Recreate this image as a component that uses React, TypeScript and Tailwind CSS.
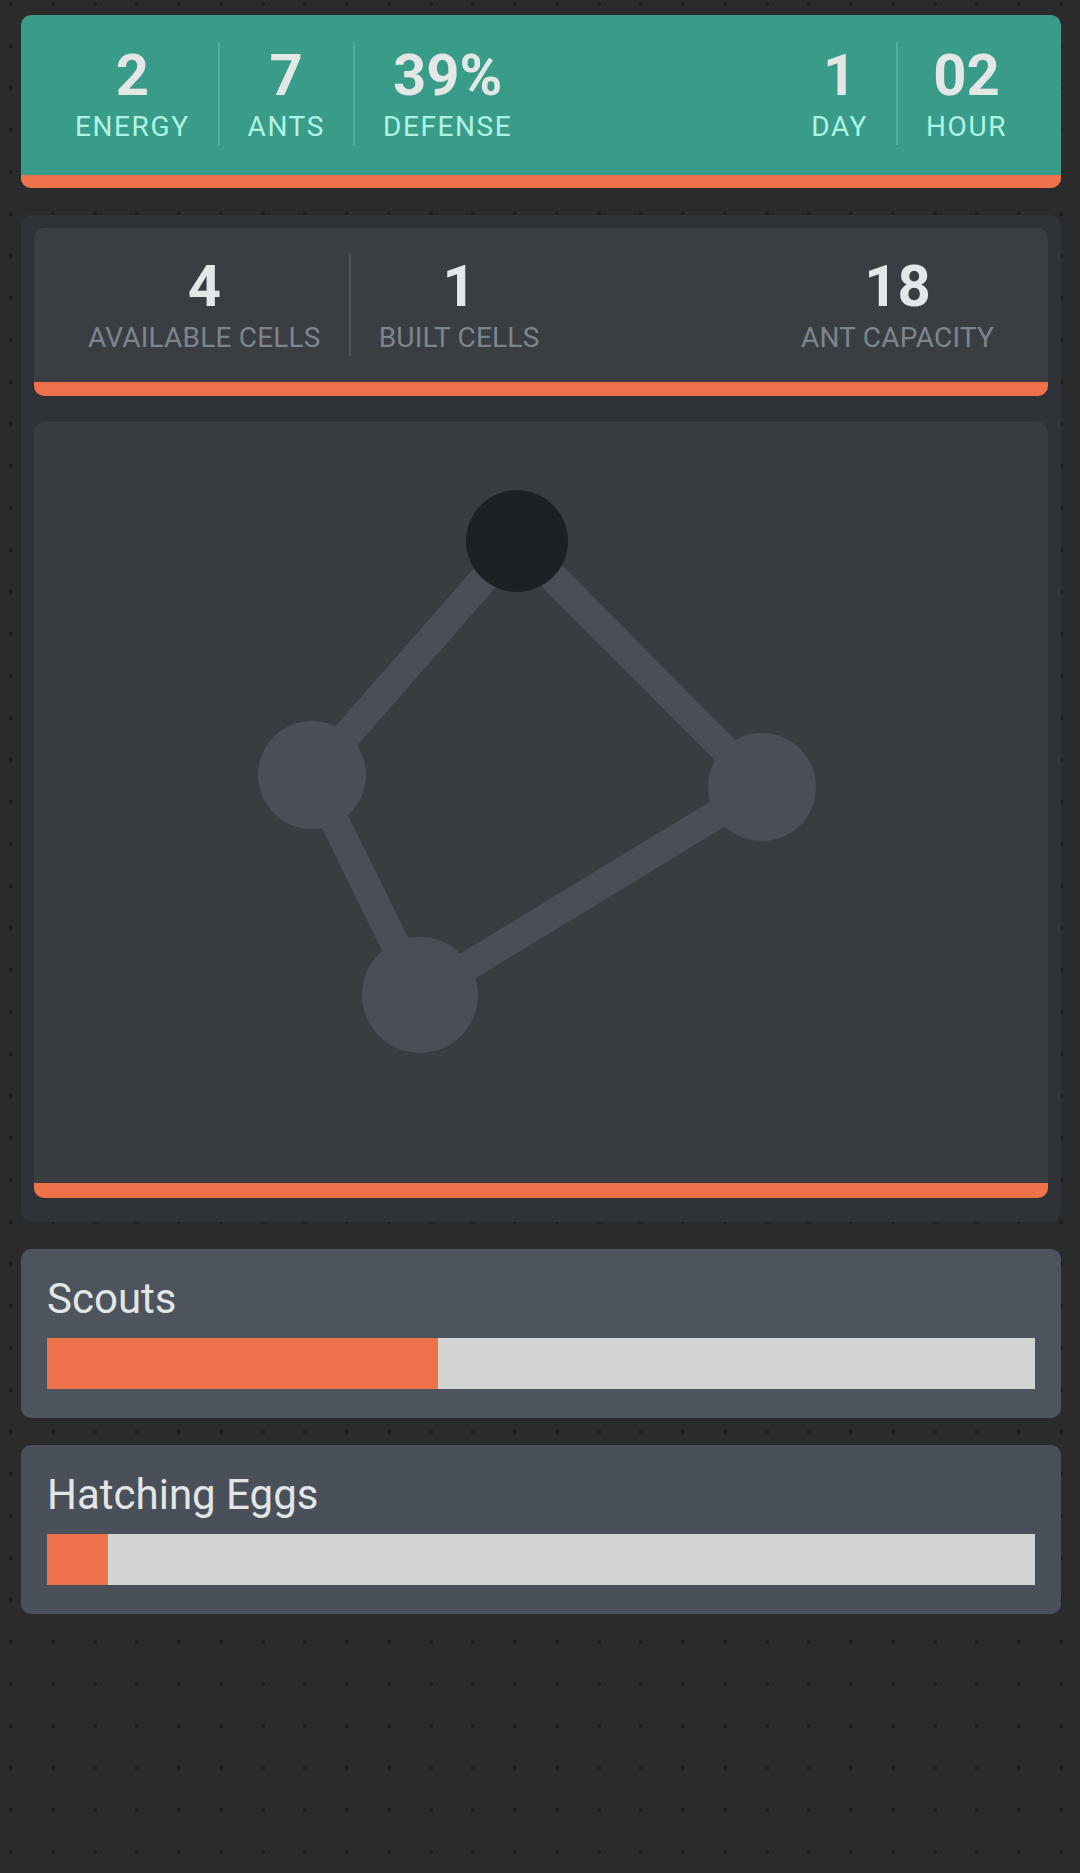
import React from 'react';

type Stat = { value: string; label: string };

const StatCol: React.FC<{ stat: Stat; divider?: boolean; tone: 'teal' | 'dark' }> = ({ stat, divider, tone }) => (
  <div
    className={`flex h-[103px] flex-col items-center justify-center px-7 ${
      divider ? (tone === 'teal' ? 'border-r-2 border-[#55ae9c]' : 'border-r-2 border-[#50555c]') : ''
    }`}
  >
    <div className="text-[58px] font-bold leading-none text-[#e3e7e5]">{stat.value}</div>
    <div
      className={`mt-[9px] text-[28px] leading-none ${
        tone === 'teal' ? 'tracking-[1.6px] text-[#aef3e3]' : 'tracking-[0.2px] text-[#7d858e]'
      }`}
    >
      {stat.label}
    </div>
  </div>
);

const ProgressPanel: React.FC<{ title: string; pct: number; bg: string }> = ({ title, pct, bg }) => (
  <div className={`rounded-[10px] px-[26px] pt-[29px] pb-[29px] ${bg}`}>
    <div className="text-[42px] leading-none text-[#e4e6e6]">{title}</div>
    <div className="mt-[18px] h-[51px] w-full bg-[#d2d4d2]">
      <div className="h-full bg-[#ed7149]" style={{ width: `${pct}%` }} />
    </div>
  </div>
);

// colony graph, coords relative to the graph card
const nodes = [
  { x: 483, y: 119, r: 51, dark: true },
  { x: 278, y: 353, r: 54 },
  { x: 728, y: 365, r: 54 },
  { x: 386, y: 573, r: 58 },
];

const edges: [number, number][] = [
  [0, 1],
  [0, 2],
  [1, 3],
  [3, 2],
];

export default function App() {
  return (
    <div
      className="min-h-[1873px] w-[1080px] bg-[#2b2b2b] bg-[radial-gradient(circle,#1f1f1f_2px,transparent_2.6px)] bg-[length:42px_42px] bg-[position:-10px_-17px] pt-[15px]"
      style={{ fontFamily: 'Roboto, "Noto Sans", sans-serif' }}
    >
      <div className="ml-[21px] flex w-[1040px] flex-col gap-[27px]">
        {/* header */}
        <div className="overflow-hidden rounded-[10px] bg-[#389c89]">
          <div className="flex items-center px-[26px] pt-[27px] pb-[30px]">
            <StatCol tone="teal" divider stat={{ value: '2', label: 'ENERGY' }} />
            <StatCol tone="teal" divider stat={{ value: '7', label: 'ANTS' }} />
            <StatCol tone="teal" stat={{ value: '39%', label: 'DEFENSE' }} />
            <div className="flex-1" />
            <StatCol tone="teal" divider stat={{ value: '1', label: 'DAY' }} />
            <StatCol tone="teal" stat={{ value: '02', label: 'HOUR' }} />
          </div>
          <div className="h-[13px] bg-[#ed7149]" />
        </div>

        {/* colony */}
        <div className="flex flex-col gap-[26px] rounded-[10px] bg-[#2f3236] px-[13px] pt-[13px] pb-[24px]">
          <div className="overflow-hidden rounded-[10px] bg-[#3a3e42]">
            <div className="flex items-center px-[26px] pt-[25px] pb-[26px]">
              <StatCol tone="dark" divider stat={{ value: '4', label: 'AVAILABLE CELLS' }} />
              <StatCol tone="dark" stat={{ value: '1', label: 'BUILT CELLS' }} />
              <div className="flex-1" />
              <StatCol tone="dark" stat={{ value: '18', label: 'ANT CAPACITY' }} />
            </div>
            <div className="h-[14px] bg-[#ed7149]" />
          </div>

          <div className="overflow-hidden rounded-[10px] bg-[#393d41]">
            <svg width="1014" height="761" viewBox="0 0 1014 761" className="block">
              {edges.map(([a, b], i) => (
                <line
                  key={i}
                  x1={nodes[a].x}
                  y1={nodes[a].y}
                  x2={nodes[b].x}
                  y2={nodes[b].y}
                  stroke="#4a4f57"
                  strokeWidth={29}
                />
              ))}
              {nodes.map((n, i) => (
                <circle key={i} cx={n.x} cy={n.y} r={n.r} fill={n.dark ? '#1d2125' : '#4a4f57'} />
              ))}
            </svg>
            <div className="h-[15px] bg-[#ed7149]" />
          </div>
        </div>

        <ProgressPanel title="Scouts" pct={39.6} bg="bg-[#4d545d]" />
        <ProgressPanel title="Hatching Eggs" pct={6.2} bg="bg-[#49505a]" />
      </div>
    </div>
  );
}
